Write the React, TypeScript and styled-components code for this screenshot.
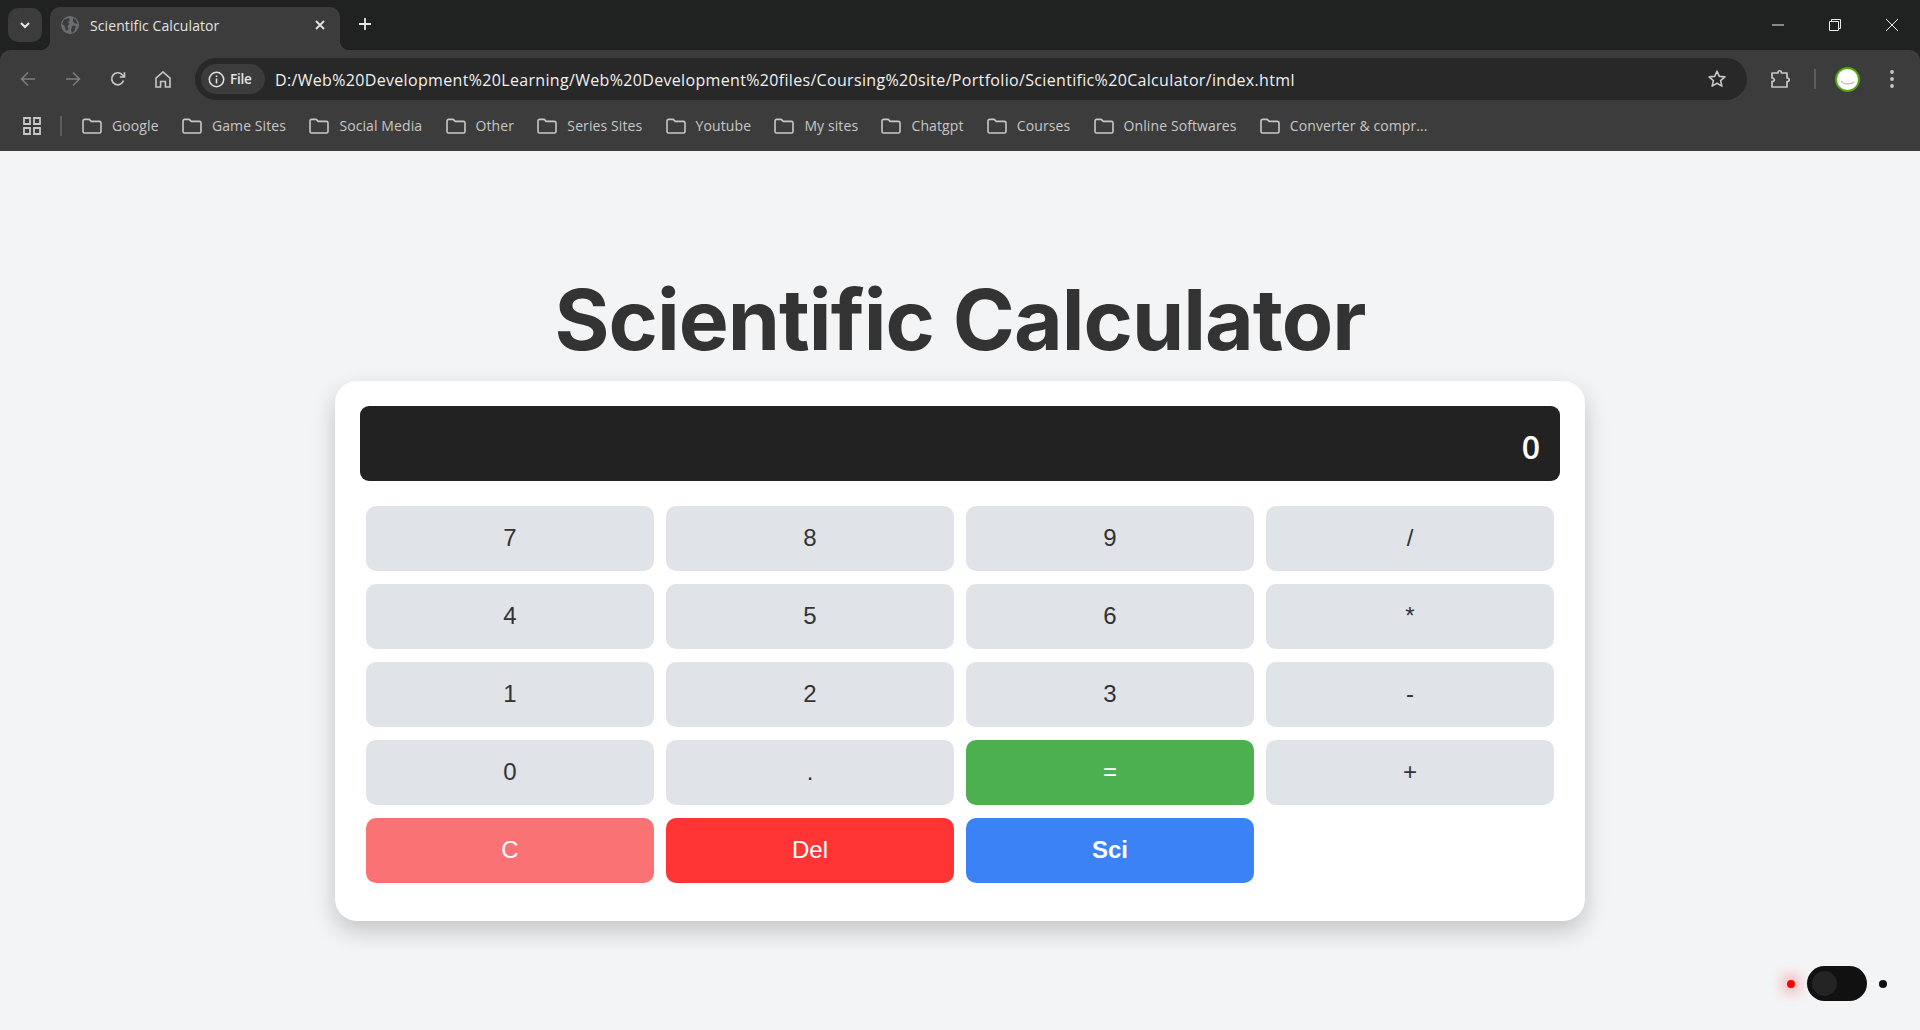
import React from 'react';
import styled, { createGlobalStyle } from 'styled-components';

const Global = createGlobalStyle`
  html, body { margin: 0; padding: 0; background: #f3f4f6; }
  body { height: 1030px; overflow: hidden; font-family: "Open Sans", "Liberation Sans", sans-serif; }
  * { box-sizing: border-box; }
`;

const Browser = styled.div`
  display: flex;
  flex-direction: column;
  height: 1030px;
  background: #202222;
`;

const TabStrip = styled.header`
  display: flex;
  align-items: flex-end;
  height: 50px;
  padding-left: 8px;
  background: #202222;
`;

const TabListButton = styled.div`
  display: flex;
  align-items: center;
  justify-content: center;
  align-self: flex-start;
  width: 34px;
  height: 34px;
  margin-top: 8px;
  margin-right: 8px;
  border-radius: 10px;
  background: #3c3c3c;
  color: #e8e8e8;
`;

const Tab = styled.div`
  position: relative;
  display: flex;
  align-items: center;
  width: 290px;
  height: 43px;
  padding: 0 14px 7px 11px;
  border-radius: 10px 10px 0 0;
  background: #3c3c3c;
  color: #e3e3e3;

  &::before, &::after {
    content: "";
    position: absolute;
    bottom: 0;
    width: 10px;
    height: 10px;
  }
  &::before { left: -10px; background: radial-gradient(circle at 0 0, transparent 10px, #3c3c3c 10.5px); }
  &::after { right: -10px; background: radial-gradient(circle at 100% 0, transparent 10px, #3c3c3c 10.5px); }
`;

const TabTitle = styled.span`
  flex: 1;
  margin-left: 11px;
  font-size: 14px;
  letter-spacing: 0.1px;
  white-space: nowrap;
`;

const NewTab = styled.div`
  display: flex;
  align-self: flex-start;
  margin: 17px 0 0 18px;
  color: #e8e8e8;
`;

const WindowControls = styled.div`
  display: grid;
  grid-template-columns: repeat(3, 57px);
  align-self: flex-start;
  height: 49px;
  margin-left: auto;
  color: #eee;
`;

const WindowButton = styled.div`
  display: flex;
  align-items: center;
  justify-content: center;
`;

const Toolbar = styled.div`
  background: #3c3c3c;
  border-radius: 10px 10px 0 0;
`;

const NavRow = styled.div`
  display: flex;
  height: 58px;
  padding: 8px 0 8px 6px;
`;

const NavButtons = styled.nav`
  display: flex;
  align-items: center;
  gap: 1px;
  height: 42px;
`;

const NavButton = styled.div<{ $dim?: boolean }>`
  display: flex;
  align-items: center;
  justify-content: center;
  width: 44px;
  color: ${p => (p.$dim ? '#7e7e7e' : '#c7c7c7')};
`;

const Omnibox = styled.div`
  flex: 1;
  display: flex;
  align-items: center;
  height: 42px;
  margin-left: 10px;
  padding: 0 20px 0 6px;
  border-radius: 21px;
  background: #282828;
`;

const SiteChip = styled.div`
  display: flex;
  align-items: center;
  width: 64px;
  height: 30px;
  padding-left: 7px;
  border-radius: 15px;
  background: #3c3c3c;
  color: #e3e3e3;
`;

const ChipLabel = styled.span`
  margin-left: 5px;
  font-size: 13.5px;
  font-weight: 600;
  letter-spacing: -0.2px;
`;

const Url = styled.span`
  flex: 1;
  margin-left: 10px;
  padding-top: 1px;
  color: #f0f0f0;
  font-size: 16px;
  letter-spacing: 0.33px;
  white-space: nowrap;
`;

const StarIcon = styled.div`
  display: flex;
  color: #c7c7c7;
`;

const ToolbarEnd = styled.div`
  display: grid;
  grid-template-columns: 44px 23px 42px 47px;
  align-items: center;
  justify-items: center;
  width: 173px;
  height: 42px;
  padding-left: 12px;
  color: #c7c7c7;
`;

const ToolbarDivider = styled.div`
  width: 2px;
  height: 20px;
  background: #5c5c5c;
`;

const Avatar = styled.div`
  display: flex;
  width: 25px;
  height: 25px;
  border: 2px solid #4fa90d;
  border-radius: 50%;
  background: #fff;
`;

const BookmarkBar = styled.div`
  display: flex;
  align-items: center;
  height: 43px;
  padding: 0 0 8px 23px;
  color: #c7c7c7;
`;

const BarDivider = styled.div`
  width: 2px;
  height: 20px;
  margin: 0 20px 0 19px;
  background: #5c5c5c;
`;

const BookmarkList = styled.div`
  display: flex;
  gap: 23.3px;
`;

const Bookmark = styled.div`
  display: flex;
  align-items: center;
  gap: 10px;
  color: #c7c7c7;
  font-size: 14px;
  letter-spacing: 0.1px;
  white-space: nowrap;
`;

const Page = styled.main`
  flex: 1;
  display: flex;
  flex-direction: column;
  align-items: center;
  min-height: 0;
  padding-top: 121px;
  background: #f3f4f6;
`;

const Title = styled.h1`
  margin: 0 0 13px;
  color: #333;
  font-family: Inter, "Liberation Sans", sans-serif;
  font-size: 84px;
  font-weight: 700;
  line-height: 96px;
  letter-spacing: -1px;
  white-space: nowrap;
`;

const Calculator = styled.section`
  width: 1250px;
  padding: 25px 25px 38px;
  border-radius: 22px;
  background: #fff;
  box-shadow: 0 10px 24px rgba(0, 0, 0, 0.2);
`;

const Display = styled.div`
  height: 75px;
  margin-bottom: 25px;
  padding: 18px 20px 0;
  border-radius: 9px;
  background: #222;
  color: #fff;
  font-size: 32px;
  font-weight: 600;
  line-height: 46px;
  text-align: right;
`;

const Keypad = styled.div`
  display: grid;
  grid-template-columns: repeat(4, 1fr);
  grid-auto-rows: 65px;
  gap: 13px 12px;
  padding: 0 6px;
`;

const tones = {
  plain: { bg: '#e0e3e8', fg: '#333' },
  equals: { bg: '#4caf50', fg: '#fff' },
  clear: { bg: '#fa7274', fg: '#fff' },
  del: { bg: '#ff3535', fg: '#fff' },
  sci: { bg: '#3b82f6', fg: '#fff' },
};

type Tone = keyof typeof tones;

const Key = styled.button<{ $tone: Tone }>`
  border: 0;
  border-radius: 10px;
  padding: 0 0 2px;
  background: ${p => tones[p.$tone].bg};
  color: ${p => tones[p.$tone].fg};
  font-family: "Liberation Sans", Arial, sans-serif;
  font-size: 24px;
  font-weight: ${p => (p.$tone === 'sci' ? 700 : 400)};
`;

const ThemeWidget = styled.div`
  position: fixed;
  right: 33px;
  bottom: 29px;
  display: flex;
  align-items: center;
`;

const RedDot = styled.span`
  width: 8px;
  height: 8px;
  margin-right: 12px;
  border-radius: 50%;
  background: #f00;
  box-shadow: 0 0 14px 5px rgba(255, 0, 0, 0.3);
`;

const Toggle = styled.div`
  display: flex;
  align-items: center;
  width: 60px;
  height: 35px;
  padding-left: 5px;
  border-radius: 18px;
  background: #111;
`;

const Knob = styled.span`
  width: 25px;
  height: 25px;
  border-radius: 50%;
  background: #242424;
`;

const BlackDot = styled.span`
  width: 8px;
  height: 8px;
  margin-left: 12px;
  border-radius: 50%;
  background: #111;
`;

const Folder = () => (
  <svg width="20" height="16" viewBox="0 0 20 16" fill="none" stroke="currentColor" strokeWidth="1.6">
    <path d="M1 3a1.6 1.6 0 0 1 1.6-1.6h4.6l2 2h8.2A1.6 1.6 0 0 1 19 5v8.4a1.6 1.6 0 0 1-1.6 1.6H2.6A1.6 1.6 0 0 1 1 13.4z" />
  </svg>
);

const Globe = () => (
  <svg width="18" height="18" viewBox="0 0 18 18">
    <circle cx="9" cy="9" r="9" fill="#6a6e73" />
    <path d="M3 3.5 7.5 2 9 4 7 6 8.5 8l-2 2 1 3.5L5 15 3.5 10 1 8zM12 2l3 2 1.5 4-2.5-.5-2-2zM11 10l4-.5-1.5 5.5-2.5 2-1-3z" fill="#3c3c3c" />
  </svg>
);

const bookmarks = ['Google', 'Game Sites', 'Social Media', 'Other', 'Series Sites', 'Youtube', 'My sites', 'Chatgpt', 'Courses', 'Online Softwares', 'Converter & compr...'];

const rows: { label: string; tone: Tone }[] = [
  ...['7', '8', '9', '/', '4', '5', '6', '*', '1', '2', '3', '-', '0', '.'].map(label => ({ label, tone: 'plain' as Tone })),
  { label: '=', tone: 'equals' },
  { label: '+', tone: 'plain' },
  { label: 'C', tone: 'clear' },
  { label: 'Del', tone: 'del' },
  { label: 'Sci', tone: 'sci' },
];

export default function App() {
  return (
    <Browser>
      <Global />
      <TabStrip>
        <TabListButton>
          <svg width="12" height="12" viewBox="0 0 12 12" fill="none" stroke="currentColor" strokeWidth="2"><path d="M2 4l4 4 4-4" /></svg>
        </TabListButton>
        <Tab>
          <Globe />
          <TabTitle>Scientific Calculator</TabTitle>
          <svg width="12" height="12" viewBox="0 0 12 12" fill="none" stroke="currentColor" strokeWidth="1.8"><path d="M2 2l8 8M10 2l-8 8" /></svg>
        </Tab>
        <NewTab>
          <svg width="14" height="14" viewBox="0 0 14 14" fill="none" stroke="currentColor" strokeWidth="1.8"><path d="M7 1v12M1 7h12" /></svg>
        </NewTab>
        <WindowControls>
          <WindowButton><svg width="14" height="14" viewBox="0 0 14 14" stroke="currentColor"><path d="M1 7h12" /></svg></WindowButton>
          <WindowButton><svg width="14" height="14" viewBox="0 0 14 14" fill="none" stroke="currentColor"><path d="M1.5 3.5h9v9h-9zM3.5 3.5v-2h9v9h-2" /></svg></WindowButton>
          <WindowButton><svg width="14" height="14" viewBox="0 0 14 14" fill="none" stroke="currentColor"><path d="M1 1l12 12M13 1L1 13" /></svg></WindowButton>
        </WindowControls>
      </TabStrip>
      <Toolbar>
        <NavRow>
          <NavButtons>
            <NavButton $dim><svg width="16" height="16" viewBox="0 0 16 16" fill="none" stroke="currentColor" strokeWidth="1.5"><path d="M15 8H1.5M8 1.5 1.5 8 8 14.5" /></svg></NavButton>
            <NavButton $dim><svg width="16" height="16" viewBox="0 0 16 16" fill="none" stroke="currentColor" strokeWidth="1.5"><path d="M1 8h13.5M8 1.5 14.5 8 8 14.5" /></svg></NavButton>
            <NavButton><svg width="16" height="16" viewBox="0 0 16 16" fill="none" stroke="currentColor" strokeWidth="1.7"><path d="M13.5 9.5a6 6 0 1 1-1.5-6L14.5 6M14.5 1.2V6H9.8" /></svg></NavButton>
            <NavButton><svg width="16" height="17" viewBox="0 0 16 17" fill="none" stroke="currentColor" strokeWidth="1.6"><path d="M1 7.2 8 1l7 6.2V16h-4.6v-5.5H5.6V16H1z" /></svg></NavButton>
          </NavButtons>
          <Omnibox>
            <SiteChip>
              <svg width="17" height="17" viewBox="0 0 17 17" fill="none" stroke="currentColor" strokeWidth="1.5"><circle cx="8.5" cy="8.5" r="7.2" /><path d="M8.5 7.5V12.5M8.5 4.5v1.6" /></svg>
              <ChipLabel>File</ChipLabel>
            </SiteChip>
            <Url>D:/Web%20Development%20Learning/Web%20Development%20files/Coursing%20site/Portfolio/Scientific%20Calculator/index.html</Url>
            <StarIcon>
              <svg width="20" height="20" viewBox="0 0 20 20" fill="none" stroke="currentColor" strokeWidth="1.6" strokeLinejoin="round"><path d="M10 2.2l2.3 5.2 5.6.5-4.3 3.7 1.3 5.5-4.9-2.9-4.9 2.9 1.3-5.5L2.1 7.900l5.6-.5z" /></svg>
            </StarIcon>
          </Omnibox>
          <ToolbarEnd>
            <svg width="22" height="22" viewBox="0 0 22 22" fill="none" stroke="currentColor" strokeWidth="1.7" strokeLinejoin="round"><path d="M2 5h6c0-3 3.500-3 3.500 0H17v5c3 0 3 3.500 0 3.500V19H2v-5.500c3 0 3-3.500 0-3.500z" /></svg>
            <ToolbarDivider />
            <Avatar>
              <svg width="21" height="21" viewBox="0 0 21 21" fill="none" stroke="#aaa" strokeWidth="1"><path d="M4 12c3 3.500 9 4 13 1" /></svg>
            </Avatar>
            <svg width="4" height="18" viewBox="0 0 4 18" fill="currentColor"><circle cx="2" cy="2" r="1.900" /><circle cx="2" cy="9" r="1.900" /><circle cx="2" cy="16" r="1.900" /></svg>
          </ToolbarEnd>
        </NavRow>
        <BookmarkBar>
          <svg width="18" height="18" viewBox="0 0 18 18" fill="none" stroke="currentColor" strokeWidth="1.800"><path d="M1 1h6v6H1zM11 1h6v6h-6zM1 11h6v6H1zM11 11h6v6h-6z" /></svg>
          <BarDivider />
          <BookmarkList>
            {bookmarks.map(name => (
              <Bookmark key={name}><Folder />{name}</Bookmark>
            ))}
          </BookmarkList>
        </BookmarkBar>
      </Toolbar>
      <Page>
        <Title>Scientific Calculator</Title>
        <Calculator>
          <Display>0</Display>
          <Keypad>
            {rows.map(k => (
              <Key key={k.label} $tone={k.tone}>{k.label}</Key>
            ))}
          </Keypad>
        </Calculator>
      </Page>
      <ThemeWidget>
        <RedDot />
        <Toggle><Knob /></Toggle>
        <BlackDot />
      </ThemeWidget>
    </Browser>
  );
}
